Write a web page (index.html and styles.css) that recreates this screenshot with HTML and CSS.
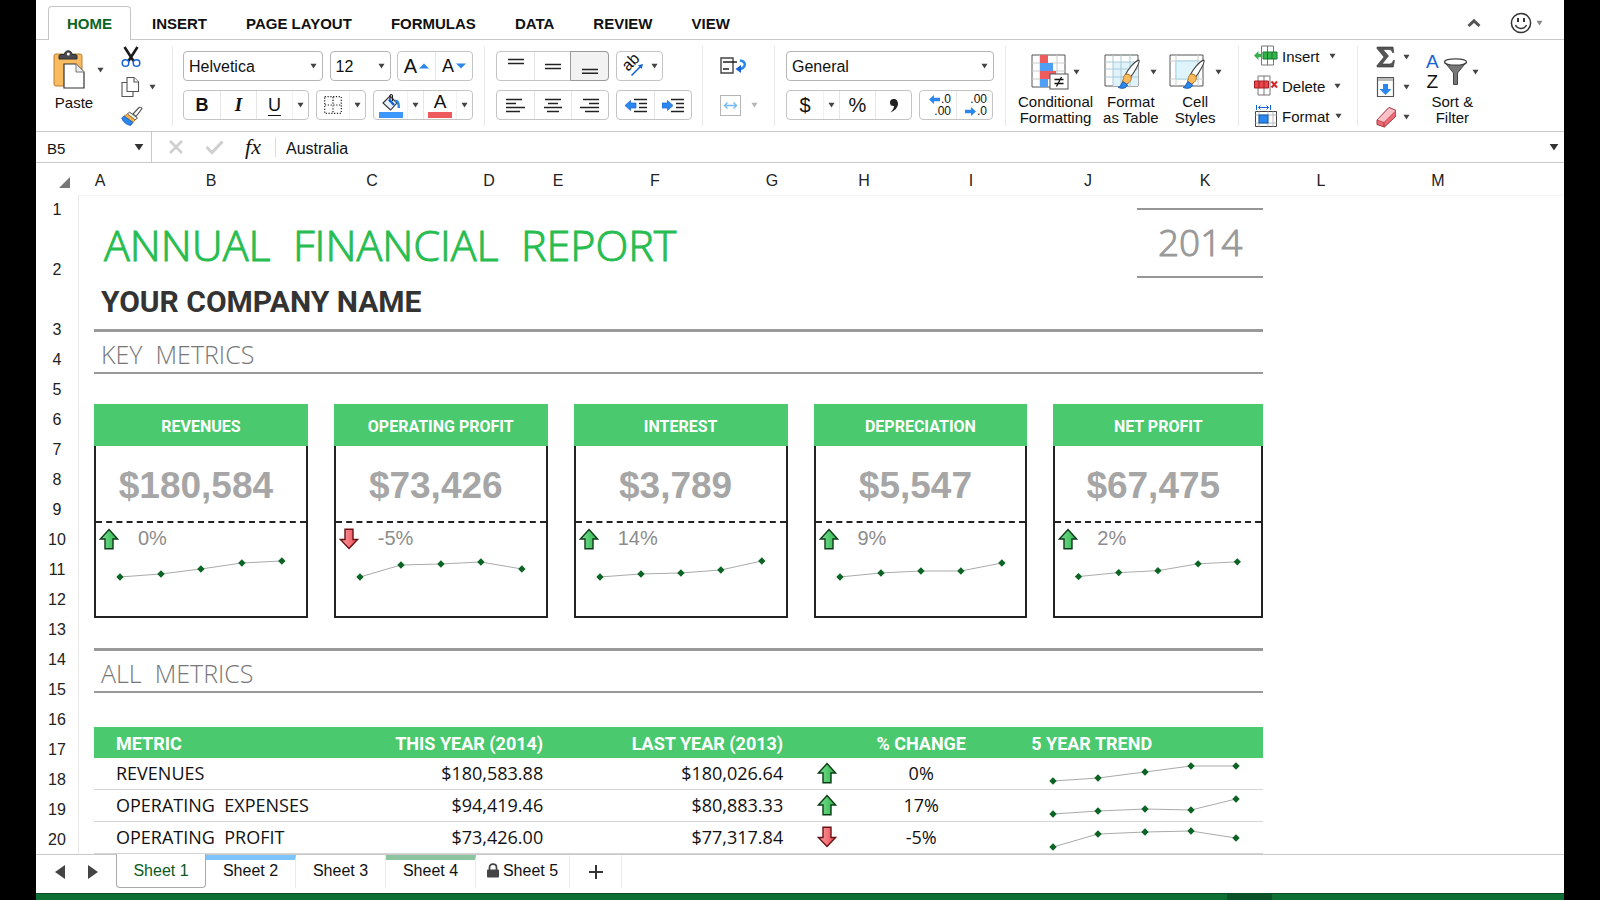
FILE: index.html
```html
<!DOCTYPE html>
<html lang="en">
<head>
<meta charset="utf-8">
<title>Annual Financial Report</title>
<link rel="stylesheet" href="styles.css">
</head>
<body>
<svg class="defs" aria-hidden="true">
  <defs>
    <linearGradient id="gUp" x1="0" x2="1"><stop offset="0" stop-color="#7be08f"/><stop offset="1" stop-color="#2fb550"/></linearGradient>
    <linearGradient id="gDown" x1="0" x2="1"><stop offset="0" stop-color="#f9a3a8"/><stop offset="1" stop-color="#ee4a50"/></linearGradient>
    <marker id="dot" markerUnits="userSpaceOnUse" markerWidth="8" markerHeight="8" refX="4" refY="4"><path d="M4 0.3 7.7 4 4 7.7 0.3 4Z" fill="#0b6424"/></marker>
    <symbol id="caret" viewBox="0 0 8 6"><path d="M0.5 0.5h7L4 5.8Z" fill="currentColor"/></symbol>
    <symbol id="up" viewBox="0 0 20 22"><path d="M10 1.5 18.6 11H14v9.7H6V11H1.4Z" fill="url(#gUp)" stroke="#0d3a18" stroke-width="1.4"/></symbol>
    <symbol id="down" viewBox="0 0 20 22"><path d="M10 20.5 18.6 11.500H14V1.300H6v10.200H1.400Z" fill="url(#gDown)" stroke="#6a1216" stroke-width="1.4"/></symbol>
    <symbol id="brush" viewBox="0 0 24 34"><path d="M8 17C11 11 17 3 22.500 1.200 24 3 18 14 13 20Z" fill="#fff" stroke="#444" stroke-width="1.200"/><path d="M6 21c0-4 3-6 6-4.500 3.500 2 3 6 0 8.500l-3 2-4-3Z" fill="#f9b95c" stroke="#a86b1c" stroke-width="1"/><path d="M0.500 30c3 0 3-4 5-6l5 3.500c-1 4-7 4.500-10 2.500Z" fill="#2b86ee" stroke="#1458b0" stroke-width="1"/></symbol>
  </defs>
</svg>

<div class="app">
  <header class="tabs">
    <nav class="tabs-list">
      <button class="tab tab-active">HOME</button>
      <button class="tab">INSERT</button>
      <button class="tab">PAGE LAYOUT</button>
      <button class="tab">FORMULAS</button>
      <button class="tab">DATA</button>
      <button class="tab">REVIEW</button>
      <button class="tab">VIEW</button>
    </nav>
    <div class="tabs-tools">
      <button class="plain" aria-label="Collapse ribbon"><svg width="14" height="10" viewBox="0 0 14 10"><path d="M1.500 8 7 2.800 12.500 8" fill="none" stroke="#555" stroke-width="3"/></svg></button>
      <button class="plain smile" aria-label="Send feedback"><svg width="22" height="22" viewBox="0 0 22 22" fill="none" stroke="#333" stroke-width="1.500"><circle cx="11" cy="11" r="9.600"/><path d="M8 6v4M14 6v4" stroke-width="2"/><path d="M5.500 13c2 4.500 9 4.500 11 0"/></svg><svg class="caret grey"><use href="#caret"/></svg></button>
    </div>
  </header>

  <section class="ribbon" aria-label="Home">
    <div class="group g-clip">
      <div class="paste">
        <button class="plain paste-top" aria-label="Paste">
          <svg width="32" height="40" viewBox="0 0 32 40"><rect x="1" y="4" width="28" height="32" rx="2" fill="#f8bb5f" stroke="#b9802f"/><path d="M6 9V6q0-1.500 2-1.500h3.500C11.500-.500 19-.500 19 4.500h3q2 0 2 1.500v3Z" fill="#4a4a4e" stroke="#2e2e30"/><circle cx="15.300" cy="4" r="1.500" fill="#fff"/><path d="M11 14h12l8 8v16H11Z" fill="#fff" stroke="#333" stroke-width="1.200"/><path d="M23 14v8h8" fill="#eee" stroke="#777"/></svg>
          <svg class="caret"><use href="#caret"/></svg>
        </button>
        <span class="big-label">Paste</span>
      </div>
      <div class="clip-tools">
        <button class="plain" aria-label="Cut"><svg width="20" height="22" viewBox="0 0 20 22"><path d="M3.500 1 12.500 15M16.500 1 7.500 15" stroke="#1a1a1a" stroke-width="2.600"/><circle cx="4.500" cy="17" r="3.300" fill="#fff" stroke="#1763d6" stroke-width="1.500"/><circle cx="15.500" cy="17" r="3.300" fill="#fff" stroke="#1763d6" stroke-width="1.500"/></svg></button>
        <button class="plain" aria-label="Copy"><svg width="20" height="22" viewBox="0 0 20 22" fill="#fff" stroke="#555" stroke-width="1.100"><path d="M1 6.500h8l3 3V20.500H1Z"/><path d="M6 1.500h7l4.500 4.500v9.500H6Z"/><path d="M13 1.500V6h4.500"/></svg><svg class="caret"><use href="#caret"/></svg></button>
        <button class="plain" aria-label="Format painter"><svg width="22" height="20" viewBox="0 0 22 20"><path d="M12 8 18 1.500q2-.800 3 1L15 10.500Z" fill="#fff" stroke="#555" stroke-width="1.200"/><path d="M8.500 6 16.500 12 14 14 6.500 8Z" fill="#eee" stroke="#555"/><path d="M6.500 8 14 14 12 16.500 3 10Z" fill="#f7b24f" stroke="#a8742a" stroke-width=".800"/><path d="M3 10 12 16.500 9.500 19.500Q3 18 .700 12Z" fill="#2b86ee" stroke="#1458b0" stroke-width=".800"/></svg></button>
      </div>
    </div>

    <div class="group g-rows g-font">
      <div class="row">
        <label class="select w-font"><select aria-label="Font"><option>Helvetica</option></select><svg class="caret"><use href="#caret"/></svg></label>
        <label class="select w-size"><select aria-label="Font size"><option>12</option></select><svg class="caret"><use href="#caret"/></svg></label>
        <div class="btns w-37">
          <button class="size-up" aria-label="Increase font size">A<svg width="10" height="6" viewBox="0 0 10 6"><path d="M0 5.500h10L5 .500Z" fill="#2b86ee"/></svg></button>
          <button class="size-down" aria-label="Decrease font size">A<svg width="10" height="6" viewBox="0 0 10 6"><path d="M0 .500h10L5 5.500Z" fill="#2b86ee"/></svg></button>
        </div>
      </div>
      <div class="row">
        <div class="btns w-36">
          <button class="b">B</button><button class="i">I</button><button class="u">U</button><button class="drop" aria-label="Underline styles"><svg class="caret"><use href="#caret"/></svg></button>
        </div>
        <div class="btns w-32">
          <button aria-label="Borders"><svg width="18" height="18" viewBox="0 0 18 18" fill="none" stroke="#222" stroke-width="1.200" stroke-dasharray="1.200 1.600"><path d="M.700.700h16.600v16.600H.700ZM9 1v16M1 9h16"/></svg></button><button class="drop" aria-label="Border styles"><svg class="caret"><use href="#caret"/></svg></button>
        </div>
        <div class="btns w-33">
          <button class="stack" aria-label="Fill color"><svg width="24" height="25" viewBox="0 0 24 25"><rect y="19" width="24" height="6" fill="#3d97fa"/><path d="M4 10 11 3l7 7-6.500 7Z" fill="#e6f1fd" stroke="#333" stroke-width="1.100"/><path d="M11 9V2.500q1-2 2.500 0V8" fill="none" stroke="#222" stroke-width="1.200"/><path d="M16 8q4-1 3.800 7" fill="none" stroke="#2b86ee" stroke-width="2.500"/><path d="M10 6.500 15 12" stroke="#1763d6" stroke-width="2.500"/></svg></button><button class="drop" aria-label="Fill choices"><svg class="caret"><use href="#caret"/></svg></button>
          <button class="stack font-color"><span>A</span></button><button class="drop" aria-label="Font color choices"><svg class="caret"><use href="#caret"/></svg></button>
        </div>
      </div>
    </div>

    <div class="group g-rows g-align">
      <div class="row">
        <div class="btns w-37">
          <button aria-label="Top align"><svg width="18" height="16"><path d="M1 1.500h16M1 5.500h16" stroke="#222" stroke-width="1.500"/></svg></button>
          <button aria-label="Middle align"><svg width="18" height="16"><path d="M1 6.500h16M1 10.500h16" stroke="#222" stroke-width="1.500"/></svg></button>
          <button class="pressed" aria-label="Bottom align"><svg width="18" height="16"><path d="M1 11.500h16M1 15.200h16" stroke="#222" stroke-width="1.500"/></svg></button>
        </div>
        <div class="btns w-45">
          <button class="orient" aria-label="Orientation"><svg width="24" height="24" viewBox="0 0 24 24"><text x="7" y="18" class="svg-ab" transform="rotate(-45 7 18)">ab</text><path d="M10.500 21.500 20 12" stroke="#1763d6" stroke-width="1.600"/><path d="M22 10l-1.300 5-3.700-3.700Z" fill="#1763d6"/></svg><svg class="caret"><use href="#caret"/></svg></button>
        </div>
      </div>
      <div class="row">
        <div class="btns w-37">
          <button aria-label="Align left"><svg width="20" height="15" stroke="#222" stroke-width="1.500"><path d="M0 1.500h16M0 5.500h10M0 9.500h19M0 13.500h14"/></svg></button>
          <button aria-label="Align center"><svg width="20" height="15" stroke="#222" stroke-width="1.500"><path d="M2 1.500h16M5 5.500h10M1 9.500h18M4 13.500h12"/></svg></button>
          <button aria-label="Align right"><svg width="20" height="15" stroke="#222" stroke-width="1.500"><path d="M3 1.500h16M9 5.500h10M0 9.500h19M5 13.500h14"/></svg></button>
        </div>
        <div class="btns w-37">
          <button aria-label="Decrease indent"><svg width="22" height="15"><path d="M9 1.500h13M14 5.500h8M14 9.500h8M9 13.500h13" stroke="#222" stroke-width="1.500"/><path d="M0 7.500 5.500 2.500V5H11v5H5.500v2.500Z" fill="#2b86ee" stroke="#1763d6" stroke-width=".700"/></svg></button>
          <button aria-label="Increase indent"><svg width="22" height="15"><path d="M9 1.500h13M14 5.500h8M14 9.500h8M9 13.500h13" stroke="#222" stroke-width="1.500"/><path d="M11 7.500 5.500 2.500V5H0v5h5.500v2.500Z" fill="#2b86ee" stroke="#1763d6" stroke-width=".700"/></svg></button>
        </div>
      </div>
    </div>

    <div class="group g-rows g-wrap">
      <div class="row"><button class="plain" aria-label="Wrap text"><svg width="27" height="18" viewBox="0 0 27 18"><path d="M1 1h12v15H1Z" fill="#fff" stroke="#444" stroke-width="1.400"/><path d="M3 5h14M3 12h6" stroke="#222" stroke-width="1.500"/><path d="M20 3.500q6 1 4.500 5.500-.800 2-4 3" fill="none" stroke="#2b86ee" stroke-width="2.500"/><path d="M15.500 12 21 8v8Z" fill="#1763d6"/></svg></button></div>
      <div class="row"><button class="plain merge" aria-label="Merge cells"><svg width="21" height="21" viewBox="0 0 21 21"><rect x=".500" y=".500" width="20" height="20" fill="#fff" stroke="#b5b5b5"/><path d="M4.500 10.500h12M7.500 7.500l-3 3 3 3M13.500 7.500l3 3-3 3" fill="none" stroke="#74b8f7" stroke-width="1.300"/></svg><svg class="caret light"><use href="#caret"/></svg></button></div>
    </div>

    <div class="group g-rows g-number">
      <label class="select"><select aria-label="Number format"><option>General</option></select><svg class="caret"><use href="#caret"/></svg></label>
      <div class="row">
        <div class="btns w-36 money">
          <button>$</button><button class="drop" aria-label="Currencies"><svg class="caret"><use href="#caret"/></svg></button><button>%</button><button aria-label="Comma style"><svg width="10" height="15" viewBox="0 0 10 15"><circle cx="4.500" cy="4.500" r="3.500" fill="#222"/><path d="M4 1Q9 1 9 6T1.500 14.500Q6 10 5 6Z" fill="#222"/></svg></button>
        </div>
        <div class="btns w-36">
          <button class="dec"><span class="dec-line"><svg width="11" height="9" viewBox="0 0 10 8"><path d="M0 4 4.500 0v2.500H10v3H4.500V8Z" fill="#2b86ee"/></svg>.0</span><span class="dec-line">.00</span></button>
          <button class="dec"><span class="dec-line">.00</span><span class="dec-line"><svg width="11" height="9" viewBox="0 0 10 8"><path d="M10 4 5.500 0v2.500H0v3h5.500V8Z" fill="#2b86ee"/></svg>.0</span></button>
        </div>
      </div>
    </div>

    <div class="group g-styles">
      <button class="plain big">
        <span class="big-top"><svg width="38" height="36" viewBox="0 0 38 36"><path d="M1 1h33v32H1Z" fill="#fff" stroke="#555"/><path d="M1 9h33M1 17h33M1 25h33M9 1v32M26 1v32" stroke="#ccc"/><path d="M9 1h8v8H9ZM9 17h16v8H9Z" fill="#ee5a5e"/><path d="M9 9h13v8H9ZM9 25h8v8H9Z" fill="#4fa0f5"/><rect x="19" y="20" width="18" height="15" fill="#fff" stroke="#555"/><path d="M23.500 25.500h9M23.500 29.500h9M30.500 23l-5 9.500" stroke="#111" stroke-width="1.300"/></svg><svg class="caret"><use href="#caret"/></svg></span>
        <span class="big-label">Conditional<br>Formatting</span>
      </button>
      <button class="plain big">
        <span class="big-top"><svg width="42" height="36" viewBox="0 0 42 36"><path d="M1 1h33v31H1Z" fill="#fff" stroke="#555"/><path d="M9 8h25v24H9Z" fill="#dff3fa"/><path d="M1 8h33M1 15h33M1 23h33M9 1v31M17 1v31M26 1v31" stroke="#a9cbd8"/><use href="#brush" x="8" y="5" width="34" height="32"/></svg><svg class="caret"><use href="#caret"/></svg></span>
        <span class="big-label">Format<br>as Table</span>
      </button>
      <button class="plain big">
        <span class="big-top"><svg width="42" height="36" viewBox="0 0 42 36"><path d="M1 1h33v31H1Z" fill="#fff" stroke="#555"/><path d="M1 7h33M1 25h33M7 1v31M29 1v31" stroke="#ccc"/><path d="M7 7h22v18H7Z" fill="#dff3fa" stroke="#a9d5e6"/><use href="#brush" x="8" y="5" width="34" height="32"/></svg><svg class="caret"><use href="#caret"/></svg></span>
        <span class="big-label">Cell<br>Styles</span>
      </button>
    </div>

    <div class="group g-cells">
      <button class="plain line"><svg width="24" height="22" viewBox="0 0 24 22"><path d="M7.500 1h12v19h-12ZM13.500 1v19" fill="#fff" stroke="#777"/><path d="M9 7h14v7H9Z" fill="#35b24c" stroke="#157a2b"/><path d="M13.500 7v7M18 7v7" stroke="#157a2b"/><path d="M0 10.500 4.500 6v3H8v3H4.500v3Z" fill="#35b24c"/></svg>Insert<svg class="caret"><use href="#caret"/></svg></button>
      <button class="plain line"><svg width="24" height="22" viewBox="0 0 24 22"><path d="M4 1h12v19H4ZM10 1v19" fill="#fff" stroke="#777"/><path d="M.500 6h14v7H.500Z" fill="#e8464b" stroke="#a31e22"/><path d="M5 6v7M10 6v7" stroke="#a31e22"/><path d="M17.500 6.500l5.500 6M23 6.500l-5.500 6" stroke="#d3252a" stroke-width="2"/></svg>Delete<svg class="caret"><use href="#caret"/></svg></button>
      <button class="plain line line-tight"><svg width="24" height="22" viewBox="0 0 24 22"><path d="M2.500 0v5M16.500 0v5M4.500 2.500h10M6.500.500l-2 2 2 2M12.500.500l2 2-2 2" fill="none" stroke="#1763d6"/><path d="M1.500 6.500h21v15h-21Z" fill="#fff" stroke="#444"/><path d="M1.500 10h21M1.500 18h21M5 6.500v15M14 6.500v15M19 6.500v15" stroke="#bbb"/><rect x="5" y="10" width="9" height="8" fill="#2b86ee" stroke="#1458b0"/></svg>Format<svg class="caret"><use href="#caret"/></svg></button>
    </div>

    <div class="group g-edit">
      <div class="edit-tools">
        <button class="plain" aria-label="AutoSum"><svg width="20" height="22" viewBox="0 0 20 22"><path d="M1 1h16l.800 5.500h-1.300Q16 3.500 13 3.500H7L12.500 10 6 18h7.500q3 0 3.800-3.500h1.200L17.300 21H1v-1.500L8 11 1 2.500Z" fill="#555" stroke="#333" stroke-width=".600"/></svg><svg class="caret"><use href="#caret"/></svg></button>
        <button class="plain" aria-label="Fill"><svg width="20" height="22" viewBox="0 0 20 22"><path d="M1.500 1.500h16v19h-16Z" fill="#fff" stroke="#555" stroke-width="1.200"/><path d="M2 2h15v3H2Z" fill="#bbb"/><path d="M7 8h5v5h3.500l-6 6-6-6H7Z" fill="#2b86ee"/></svg><svg class="caret"><use href="#caret"/></svg></button>
        <button class="plain" aria-label="Clear"><svg width="20" height="22" viewBox="0 0 20 22"><path d="M1 14 13 1.500l7 3V10L8.500 21 1 18.500Z" fill="#ee6a74" stroke="#a3343c"/><path d="M1 14 13 1.500l7 3L8 16.500Z" fill="#fbc1c6" stroke="#a3343c" stroke-width=".700"/><path d="M8 16.500V21" stroke="#a3343c"/></svg><svg class="caret"><use href="#caret"/></svg></button>
      </div>
      <button class="plain big">
        <span class="big-top"><span class="az"><b>A</b><i>Z</i></span><svg class="funnel" width="25" height="28" viewBox="0 0 25 28"><path d="M1.500 4 10.500 15v11.500h4V15L23.500 4Z" fill="#777" stroke="#444"/><ellipse cx="12.500" cy="4" rx="11" ry="3.200" fill="#fff" stroke="#444" stroke-width="1.300"/></svg><svg class="caret"><use href="#caret"/></svg></span>
        <span class="big-label">Sort &amp;<br>Filter</span>
      </button>
    </div>
  </section>

  <section class="formula">
    <label class="name-box"><input aria-label="Name box" value="B5"><svg class="caret-lg"><use href="#caret"/></svg></label>
    <div class="formula-tools">
      <button class="plain" aria-label="Cancel"><svg width="16" height="16" viewBox="0 0 16 16"><path d="M2 2l12 12M14 2 2 14" stroke="#cfcfcf" stroke-width="2.600"/></svg></button>
      <button class="plain" aria-label="Enter"><svg width="19" height="15" viewBox="0 0 19 15"><path d="M1.500 7 7 12.500 17.500 1.500" fill="none" stroke="#cfcfcf" stroke-width="3"/></svg></button>
      <button class="plain fx">fx</button>
    </div>
    <input class="formula-input" aria-label="Formula" value="Australia">
    <button class="plain expand" aria-label="Expand"><svg class="caret-lg"><use href="#caret"/></svg></button>
  </section>

  <div class="col-head">
    <div class="corner"><svg width="11" height="11"><path d="M11 0v11H0Z" fill="#777"/></svg></div>
    <div class="cols"><span>A</span><span>B</span><span>C</span><span>D</span><span>E</span><span>F</span><span>G</span><span>H</span><span>I</span><span>J</span><span>K</span><span>L</span><span>M</span></div>
  </div>

  <main class="sheet">
    <div class="row-head"><span>1</span><span class="tall">2</span><span class="tall">3</span><span>4</span><span>5</span><span>6</span><span>7</span><span>8</span><span>9</span><span>10</span><span>11</span><span>12</span><span>13</span><span>14</span><span>15</span><span>16</span><span>17</span><span>18</span><span>19</span><span>20</span></div>
    <div class="canvas">
      <article class="report">
        <div class="report-head">
          <div>
            <h1 class="title">ANNUAL&nbsp; FINANCIAL&nbsp; REPORT</h1>
            <p class="company">YOUR COMPANY NAME</p>
          </div>
          <div class="year">2014</div>
        </div>
        <h2 class="section">KEY&nbsp; METRICS</h2>
        <div class="cards">
          <section class="card"><h3>REVENUES</h3><p class="value">$180,584</p><p class="pct"><svg class="arrow"><use href="#up"/></svg>0%</p><svg class="spark" viewBox="0 0 210 62"><polyline points="24,23 65,20 105,15 146,9 186,7"/></svg></section>
          <section class="card"><h3>OPERATING PROFIT</h3><p class="value">$73,426</p><p class="pct"><svg class="arrow"><use href="#down"/></svg>-5%</p><svg class="spark" viewBox="0 0 210 62"><polyline points="24,23 65,11 105,10 145,8 186,15"/></svg></section>
          <section class="card"><h3>INTEREST</h3><p class="value">$3,789</p><p class="pct"><svg class="arrow"><use href="#up"/></svg>14%</p><svg class="spark" viewBox="0 0 210 62"><polyline points="24,23 65,20 105,19 145,16 186,7"/></svg></section>
          <section class="card"><h3>DEPRECIATION</h3><p class="value">$5,547</p><p class="pct"><svg class="arrow"><use href="#up"/></svg>9%</p><svg class="spark" viewBox="0 0 210 62"><polyline points="24,23 65,19 105,17 145,17 186,9"/></svg></section>
          <section class="card"><h3>NET PROFIT</h3><p class="value">$67,475</p><p class="pct"><svg class="arrow"><use href="#up"/></svg>2%</p><svg class="spark" viewBox="0 0 210 62"><polyline points="24,23 65,19 105,17 146,10 186,8"/></svg></section>
        </div>
        <h2 class="section">ALL&nbsp; METRICS</h2>
        <table class="metrics">
          <colgroup><col><col class="c-this"><col class="c-last"><col class="c-arrow"><col class="c-pct"><col class="c-trend"></colgroup>
          <thead><tr><th class="l">METRIC</th><th class="r">THIS YEAR (2014)</th><th class="r">LAST YEAR (2013)</th><th></th><th>% CHANGE</th><th class="t">5 YEAR TREND</th></tr></thead>
          <tbody>
            <tr><td class="l">REVENUES</td><td class="r">$180,583.88</td><td class="r">$180,026.64</td><td><svg class="arrow"><use href="#up"/></svg></td><td>0%</td><td><svg class="trend" viewBox="0 0 291 31"><polyline points="81,23 126,20 173,14 219,8 264,8"/></svg></td></tr>
            <tr><td class="l">OPERATING&nbsp; EXPENSES</td><td class="r">$94,419.46</td><td class="r">$80,883.33</td><td><svg class="arrow"><use href="#up"/></svg></td><td>17%</td><td><svg class="trend" viewBox="0 0 291 31"><polyline points="81,24 126,21 173,19 219,20 264,9"/></svg></td></tr>
            <tr><td class="l">OPERATING&nbsp; PROFIT</td><td class="r">$73,426.00</td><td class="r">$77,317.84</td><td><svg class="arrow"><use href="#down"/></svg></td><td>-5%</td><td><svg class="trend" viewBox="0 0 291 31"><polyline points="81,25 126,12 173,10 219,9 264,16"/></svg></td></tr>
          </tbody>
        </table>
      </article>
    </div>
  </main>

  <nav class="sheets">
    <div class="sheet-nav">
      <button class="plain" aria-label="Previous sheet"><svg width="10" height="14"><path d="M10 0v14L0 7Z" fill="#444"/></svg></button>
      <button class="plain" aria-label="Next sheet"><svg width="10" height="14"><path d="M0 0v14L10 7Z" fill="#444"/></svg></button>
    </div>
    <button class="sheet-tab current">Sheet 1</button>
    <button class="sheet-tab blue">Sheet 2</button>
    <button class="sheet-tab">Sheet 3</button>
    <button class="sheet-tab green">Sheet 4</button>
    <button class="sheet-tab locked"><svg width="12" height="15" viewBox="0 0 12 15"><rect y="6.500" width="12" height="8" rx="1" fill="#444"/><path d="M2.500 7V4.500Q2.500 1.200 6 1.200T9.500 4.500V7" fill="none" stroke="#444" stroke-width="1.700"/></svg>Sheet 5</button>
    <button class="sheet-tab add" aria-label="Add sheet"><svg width="14" height="14"><path d="M7 0v14M0 7h14" stroke="#333" stroke-width="2"/></svg></button>
  </nav>
  <footer class="status"><span class="status-mark"></span></footer>
</div>
</body>
</html>
```

FILE: styles.css
```css
* { box-sizing: border-box; }
body { margin: 0; background: #000; color: #111; font-family: "Liberation Sans", Arial, sans-serif; font-size: 16px; }
h1, h2, h3, p { margin: 0; }
button, input, select { font: inherit; color: inherit; }
svg { display: block; flex: none; }
.defs { position: absolute; width: 0; height: 0; }
.app { display: flex; flex-direction: column; height: 100vh; margin: 0 36px; background: #fff; overflow: hidden; }
.plain { display: flex; align-items: center; padding: 0; border: 0; background: none; }
.caret { width: 7px; height: 6px; color: #444; }
.caret.grey { color: #888; }
.caret.light { color: #b5b5b5; }
.caret-lg { width: 10px; height: 8px; color: #333; }

/* Ribbon tabs */
.tabs { display: flex; justify-content: space-between; height: 40px; flex: none; padding-left: 12px; border-bottom: 1px solid #c9c9c9; }
.tabs-list { display: flex; align-items: flex-end; height: 40px; gap: 39px; }
.tab { height: 34px; padding: 0; border: 0; background: none; font-size: 15px; font-weight: bold; line-height: 36px; }
.tab-active { width: 83px; margin-right: -18px; border: 1px solid #c4c4c4; border-bottom: 0; border-radius: 4px 4px 0 0; background: #fff; color: #0b6424; line-height: 34px; }
.tabs-tools { display: flex; align-items: center; gap: 29px; padding: 7px 21px 0 0; }
.smile { gap: 4px; }

/* Ribbon body */
.ribbon { display: flex; flex: none; height: 92px; padding: 6px 0 5px; border-bottom: 1px solid #c9c9c9; }
.group { display: flex; flex: none; border-left: 1px solid #e9e9e9; }
.g-rows { flex-direction: column; gap: 9px; padding: 5px 11px 0; }
.row { display: flex; gap: 7px; height: 30px; }
.select { display: grid; align-items: center; height: 30px; }
.select select, .select .caret { grid-area: 1 / 1; }
.select select { width: 100%; height: 30px; padding: 0 5px; border: 1px solid #b5b5b5; border-radius: 4px; background: #fff; appearance: none; }
.select .caret { justify-self: end; margin-right: 6px; pointer-events: none; }
.w-font { width: 141px; }
.w-size { width: 62px; margin-right: -1px; }
.btns { display: flex; height: 30px; border: 1px solid #c4c4c4; border-radius: 4px; }
.btns button { display: flex; align-items: center; justify-content: center; padding: 0; border: 0; border-left: 1px solid #e6e6e6; background: none; }
.btns button:first-child { border-left: 0; }
.w-37 button { width: 37px; }
.w-36 button { width: 36px; }
.w-33 button { width: 33px; }
.w-32 button { width: 32px; }
.w-45 button { width: 45px; }
.btns .drop { width: 16px; border-left-color: #f1f1f1; }
.btns .pressed { border: 1px solid #999; margin: -1px; width: 39px; border-radius: 0 4px 4px 0; background: #f2f2f2; }

.g-clip { width: 136px; padding-left: 17px; gap: 18px; border-left: 0; }
.paste { display: flex; flex-direction: column; gap: 5px; width: 50px; padding-top: 4px; }
.paste-top { gap: 12px; }
.paste .big-label { width: 42px; text-align: center; }
.clip-tools { display: flex; flex-direction: column; gap: 8px; }
.clip-tools .plain { height: 22px; gap: 8px; }
.big-label { font-size: 15px; line-height: 16px; white-space: nowrap; }
.g-font { width: 312px; padding-left: 10px; }
.size-up, .size-down { gap: 2px; font-size: 20px; }
.btns .size-down { font-size: 18px; }
.b { font-weight: bold; font-size: 18px; }
.btns .i { font-family: "Liberation Serif", serif; font-style: italic; font-weight: bold; font-size: 19px; }
.u { text-decoration: underline; text-underline-offset: 4px; text-decoration-thickness: 1px; font-size: 18px; }
.btns .font-color { font-size: 19px; line-height: 18px; }
.font-color span { width: 24px; height: 25px; border-bottom: 6px solid #ee5a5e; }

.g-align { width: 218px; }
.orient { gap: 6px; }
.orient svg { overflow: visible; }
.svg-ab { font-size: 16px; fill: #111; }
.g-wrap { width: 72px; padding-left: 17px; }
.merge { gap: 10px; }
.g-number { width: 231px; }
.money button { font-size: 20px; }
.btns .dec { flex-direction: column; align-items: flex-end; padding-right: 5px; font-size: 12px; line-height: 12px; }
.dec-line { display: flex; align-items: center; gap: 1px; }

.g-styles { width: 233px; padding-left: 12px; gap: 10px; }
.big { flex-direction: column; gap: 4px; padding-top: 8px; }
.big-top { display: flex; align-items: center; gap: 4px; height: 36px; }
.g-cells { width: 119px; flex-direction: column; gap: 10px; padding-left: 15px; }
.line { height: 20px; gap: 4px; font-size: 15px; }
.line .caret { margin-left: 5px; }
.line-tight .caret { margin-left: 1px; }
.g-edit { padding-left: 18px; gap: 16px; }
.edit-tools { display: flex; flex-direction: column; gap: 8px; }
.edit-tools .plain { height: 22px; gap: 7px; }
.g-edit .big-top { gap: 4px; }
.az { display: flex; flex-direction: column; font-size: 19px; line-height: 20px; }
.az b { font-weight: normal; color: #1763d6; }
.az i { font-style: normal; }

/* Formula bar */
.formula { display: flex; flex: none; align-items: stretch; height: 31px; border-bottom: 1px solid #c9c9c9; }
.name-box { display: flex; align-items: center; width: 116px; padding: 0 7px 0 11px; border-right: 1px solid #c9c9c9; }
.name-box input { min-width: 0; flex: 1; padding: 2px 0 0; border: 0; background: none; font-size: 15px; }
.formula-tools { display: flex; align-items: center; justify-content: space-between; width: 124px; margin: 5px 0; padding: 0 14px 0 16px; border-right: 1px solid #ddd; }
.fx { font-family: "Liberation Serif", serif; font-style: italic; font-size: 22px; line-height: 20px; }
.formula-input { flex: 1; min-width: 0; padding: 3px 10px 0; border: 0; background: none; }
.expand { padding-right: 5px; }

/* Grid headings */
.col-head { display: flex; flex: none; height: 32px; color: #222; }
.corner { width: 43px; padding: 14px 0 0 23px; }
.cols { display: grid; flex: 1; grid-template-columns: 42fr 180fr 142fr 92fr 46fr 148fr 86fr 98fr 116fr 118fr 116fr 116fr 118fr 67fr; line-height: 36px; text-align: center; }
.sheet { display: flex; flex: 1; min-height: 0; overflow: hidden; }
.row-head { display: flex; flex: none; flex-direction: column; width: 42px; color: #222; line-height: 30px; text-align: center; }
.row-head .tall { padding-top: 30px; }
.canvas { display: grid; flex: 1; grid-template-columns: 1185fr 301fr; align-items: start; border-top: 1px solid #f4f4f4; border-left: 1px solid #e9e9e9; }

/* Report */
.report { padding-left: 15px; }
.report-head { display: flex; justify-content: space-between; height: 133px; padding-top: 12px; }
.title { padding: 5px 0 0 10px; color: #28bd50; font-family: "Open Sans", "Noto Sans", sans-serif; font-size: 43px; font-weight: 300; line-height: 64px; -webkit-text-stroke: 1px #28bd50; }
.company { padding-left: 7px; color: #333; font-family: Roboto, sans-serif; font-size: 30px; font-weight: bold; line-height: 50px; }
.year { width: 126px; height: 70px; border: solid #969696; border-width: 2px 0; color: #999; font-family: "Open Sans", "Noto Sans", sans-serif; font-size: 37px; font-weight: 300; line-height: 64px; text-align: center; -webkit-text-stroke: 1px #999; }
.section { height: 45px; padding-left: 7px; border: solid #999; border-width: 3px 0 2px; color: #777; font-family: "Open Sans", "Noto Sans", sans-serif; font-size: 25px; font-weight: 300; line-height: 44px; }
.cards { display: grid; grid-template-columns: 214fr 214fr 214fr 214fr 210fr; gap: 26px; margin: 30px 0; }
.card { border: 2px solid #222; border-top: 0; }
.card h3 { margin: 0 -2px; background: #4ac96e; color: #fff; font-family: Roboto, sans-serif; font-size: 16px; line-height: 46px; height: 42px; text-align: center; }
.value { height: 77px; padding-right: 10px; border-bottom: 2px dashed #222; color: #a6a6a6; font-size: 37px; font-weight: bold; line-height: 79px; text-align: center; }
.pct { display: flex; align-items: center; gap: 19px; height: 31px; padding-left: 3px; color: #8c8c8c; font-size: 20px; }
.arrow { width: 20px; height: 22px; }
.spark, .trend { width: 100%; overflow: visible; }
.spark polyline, .trend polyline { fill: none; stroke: #aaa; stroke-width: 1; marker-start: url(#dot); marker-mid: url(#dot); marker-end: url(#dot); }
.metrics { width: 100%; margin-top: 34px; table-layout: fixed; border-spacing: 0; font-family: "Open Sans", "Noto Sans", sans-serif; font-size: 18px; text-align: center; }
.metrics th { height: 31px; padding: 2px 0 0; background: #4ac96e; color: #fff; font-family: Roboto, sans-serif; font-size: 18px; line-height: 29px; }
.metrics td { height: 32px; padding: 0; border-bottom: 1px solid #d5d5d5; line-height: 31px; white-space: nowrap; }
.metrics td .arrow { margin: 0 auto; }
.metrics .l { padding-left: 22px; text-align: left; }
.metrics .r { text-align: right; }
.metrics .t { padding-left: 59px; text-align: left; }
.c-this { width: 243px; }
.c-last { width: 240px; }
.c-arrow { width: 87px; }
.c-pct { width: 102px; }
.c-trend { width: 291px; }

/* Sheet tabs */
.sheets { display: flex; flex: none; height: 39px; border-top: 1px solid #c9c9c9; }
.sheet-nav { display: flex; justify-content: space-between; width: 80px; padding: 0 18px 5px 19px; }
.sheet-tab { display: flex; align-items: center; justify-content: center; gap: 4px; width: 90px; height: 33px; padding: 0 0 2px; border: 0; border-right: 1px solid #ececec; background: none; }
.current { margin-top: -1px; height: 34px; padding: 0; border: 1px solid #aaa; border-top: 0; border-radius: 0 0 4px 4px; background: #fff; color: #0b5a20; }
.blue { border-top: 5px solid #7cc4fb; padding-bottom: 7px; }
.green { border-top: 5px solid #8cc4a0; padding-bottom: 7px; }
.locked { width: 94px; }
.add { width: 52px; padding: 0; }
.status { display: flex; justify-content: flex-end; flex: none; height: 7px; border-top: 1px solid #0a4d24; background: #0c7035; }
.status-mark { width: 45px; margin-right: 292px; background: #0a5228; }
```
